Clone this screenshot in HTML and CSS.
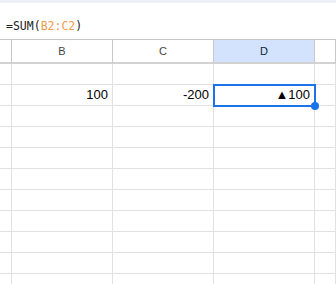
FILE: index.html
```
<!doctype html>
<html lang="en">
  <head>
    <meta charset="UTF-8">
    <title>Sheet</title>
    <link rel="stylesheet" href="styles.css">
  </head>
  <body>
    <div class="topbar"></div>
    <!-- Formula bar -->
    <div class="formula-bar"><span class="fx">=SUM(</span><span class="range">B2:C2</span><span class="fx">)</span></div>
    <!-- Grid -->
    <div class="sheet">
      <div class="cell head corner"></div>
      <div class="cell head">B</div>
      <div class="cell head">C</div>
      <div class="cell head selected">D</div>
      <div class="cell head"></div>

      <div class="cell rowhead"></div><div class="cell"></div><div class="cell"></div><div class="cell"></div><div class="cell"></div>

      <div class="cell rowhead"></div>
      <div class="cell num">100</div>
      <div class="cell num">-200</div>
      <div class="cell num active">▲100<span class="handle"></span></div>
      <div class="cell"></div>

      <div class="cell rowhead"></div><div class="cell"></div><div class="cell"></div><div class="cell"></div><div class="cell"></div>
      <div class="cell rowhead"></div><div class="cell"></div><div class="cell"></div><div class="cell"></div><div class="cell"></div>
      <div class="cell rowhead"></div><div class="cell"></div><div class="cell"></div><div class="cell"></div><div class="cell"></div>
      <div class="cell rowhead"></div><div class="cell"></div><div class="cell"></div><div class="cell"></div><div class="cell"></div>
      <div class="cell rowhead"></div><div class="cell"></div><div class="cell"></div><div class="cell"></div><div class="cell"></div>
      <div class="cell rowhead"></div><div class="cell"></div><div class="cell"></div><div class="cell"></div><div class="cell"></div>
      <div class="cell rowhead"></div><div class="cell"></div><div class="cell"></div><div class="cell"></div><div class="cell"></div>
      <div class="cell rowhead"></div><div class="cell"></div><div class="cell"></div><div class="cell"></div><div class="cell"></div>
      <div class="cell rowhead"></div><div class="cell"></div><div class="cell"></div><div class="cell"></div><div class="cell"></div>
    </div>
  </body>
</html>
```

FILE: styles.css
```
:root {
  --grid-line: #e1e1e1;
  --head-line: #c7c7c7;
  --select-blue: #1a73e8;
  --head-blue: #d3e3fd;
}
html, body {
  margin: 0;
  padding: 0;
  background: #fff;
  overflow: hidden;
}
body {
  font-family: "Liberation Sans", Arial, sans-serif;
  color: #000;
}
.topbar {
  height: 3px;
  background: #edf1f7;
}
/* Formula bar */
.formula-bar {
  height: 36px;
  box-sizing: border-box;
  padding: 16px 0 0 6px;
  font-family: "DejaVu Sans Mono", monospace;
  font-size: 11.5px;
  line-height: 14px;
  white-space: nowrap;
}
.formula-bar .fx {
  color: #222;
}
.formula-bar .range {
  color: #ee9b4c;
}
/* Sheet grid */
.sheet {
  display: grid;
  grid-template-columns: 12px 101px 101px 101px 1fr;
  border-top: 1px solid var(--head-line);
}
.cell {
  box-sizing: border-box;
  height: 21px;
  border-right: 1px solid var(--grid-line);
  border-bottom: 1px solid var(--grid-line);
  font-size: 13px;
  line-height: 20px;
  white-space: nowrap;
}
.cell.head {
  height: 24px;
  border-right-color: var(--head-line);
  border-bottom: 2px solid #d2d2d2;
  font-size: 11px;
  line-height: 22px;
  text-align: center;
  color: #444746;
}
.cell.head.selected {
  background: var(--head-blue);
  color: #0b1f3a;
}
.cell.num {
  text-align: right;
  padding-right: 4px;
}
.cell.active {
  position: relative;
}
/* Selection outline over the active cell */
.cell.active::after {
  content: "";
  position: absolute;
  left: -1px;
  top: -1px;
  right: -2px;
  bottom: -2px;
  border: 2px solid var(--select-blue);
}
.handle {
  position: absolute;
  right: -5px;
  bottom: -5px;
  width: 8px;
  height: 8px;
  border-radius: 50%;
  background: var(--select-blue);
  z-index: 2;
}
```
